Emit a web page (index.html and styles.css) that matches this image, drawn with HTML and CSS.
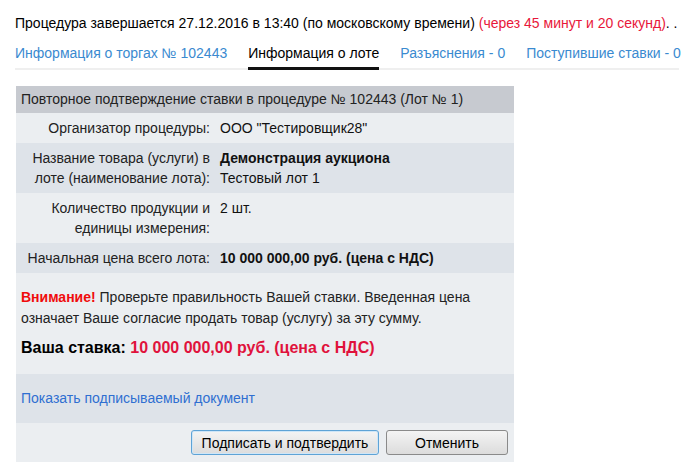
FILE: index.html
```
<!DOCTYPE html>
<html lang="ru">
<head>
<meta charset="utf-8">
<title>Повторное подтверждение ставки</title>
<link rel="stylesheet" href="styles.css">
</head>
<body>
<div class="page">
  <div class="deadline">Процедура завершается 27.12.2016 в 13:40 (по московскому времени) <span class="remain">(через 45 минут и 20 секунд)</span>. .</div>
  <nav class="tabs">
    <a class="tab" href="#">Информация о торгах № 102443</a>
    <a class="tab active" href="#">Информация о лоте</a>
    <a class="tab" href="#">Разъяснения - 0</a>
    <a class="tab" href="#">Поступившие ставки - 0</a>
  </nav>
  <section class="panel">
    <div class="panel-head">Повторное подтверждение ставки в процедуре № 102443 (Лот № 1)</div>
    <div class="row odd">
      <div class="label">Организатор процедуры:</div>
      <div class="value">ООО "Тестировщик28"</div>
    </div>
    <div class="row even">
      <div class="label">Название товара (услуги) в лоте (наименование лота):</div>
      <div class="value"><b>Демонстрация аукциона</b><br>Тестовый лот 1</div>
    </div>
    <div class="row odd">
      <div class="label">Количество продукции и единицы измерения:</div>
      <div class="value">2 шт.</div>
    </div>
    <div class="row even">
      <div class="label">Начальная цена всего лота:</div>
      <div class="value"><b>10 000 000,00 руб. (цена с НДС)</b></div>
    </div>
    <div class="warning">
      <p class="warn-text"><b class="attn">Внимание!</b> Проверьте правильность Вашей ставки. Введенная цена означает Ваше согласие продать товар (услугу) за эту сумму.</p>
      <p class="bid">Ваша ставка: <span class="bid-sum">10 000 000,00 руб. (цена с НДС)</span></p>
    </div>
    <div class="doc-link"><a href="#">Показать подписываемый документ</a></div>
    <div class="actions">
      <button class="btn primary" type="button">Подписать и подтвердить</button>
      <button class="btn" type="button">Отменить</button>
    </div>
  </section>
</div>
</body>
</html>
```
FILE: styles.css
```
html, body {
  margin: 0;
  padding: 0;
  background: #ffffff;
}
body {
  font-family: "Liberation Sans", Arial, sans-serif;
  font-size: 14px;
  color: #000;
}
.page {
  padding: 15px 10px 0 15px;
}
.deadline {
  line-height: 16px;
  white-space: nowrap;
  overflow: hidden;
}
.remain {
  color: #e8173a;
}
.tabs {
  display: flex;
  margin-top: 14px;
  border-bottom: 2px solid #efefef;
}
.tab {
  display: block;
  margin-right: 21px;
  padding-bottom: 7px;
  line-height: 16px;
  color: #3a8ad0;
  text-decoration: none;
  white-space: nowrap;
}
.tab.active {
  color: #000;
  border-bottom: 3px solid #111;
  margin-bottom: -2px;
  padding-bottom: 6px;
}
.panel {
  width: 498px;
  margin: 16px 0 0 1px;
  background: #ebeef1;
}
.panel-head {
  background: #c7cad0;
  padding: 5px 5px;
  line-height: 17px;
  color: #222;
}
.row {
  display: grid;
  grid-template-columns: 198px 1fr;
  line-height: 20px;
}
.row.odd {
  background: #ebeef1;
}
.row.even {
  background: #dee3e9;
}
.label {
  padding: 5px 4px 5px 5px;
  text-align: right;
  color: #222;
}
.value {
  padding: 5px 5px 5px 6px;
  color: #111;
}
.warning {
  background: #ebeef1;
  padding: 14px 5px 15px;
}
.warn-text {
  margin: 0;
  line-height: 21px;
  color: #222;
}
.attn {
  color: #f00c0c;
}
.bid {
  margin: 8px 0 0;
  font-size: 16px;
  font-weight: bold;
  line-height: 22px;
}
.bid-sum {
  color: #e0123c;
}
.doc-link {
  background: #dee3e9;
  padding: 16px 5px 17px;
  line-height: 16px;
}
.doc-link a {
  color: #2f6fd1;
  text-decoration: none;
}
.actions {
  display: flex;
  justify-content: flex-end;
  gap: 7px;
  padding: 7px 6px 7px;
}
.btn {
  font-family: "Liberation Sans", Arial, sans-serif;
  font-size: 14px;
  height: 25px;
  padding: 0 8px;
  width: 122px;
  border: 1px solid #8a8a8a;
  border-radius: 3px;
  background: linear-gradient(#f4f4f4, #dcdcdc);
  color: #000;
  cursor: pointer;
}
.btn.primary {
  width: 188px;
  border-color: #5ea3d6;
  box-shadow: inset 0 0 0 1px #cfe6f7;
}
```
